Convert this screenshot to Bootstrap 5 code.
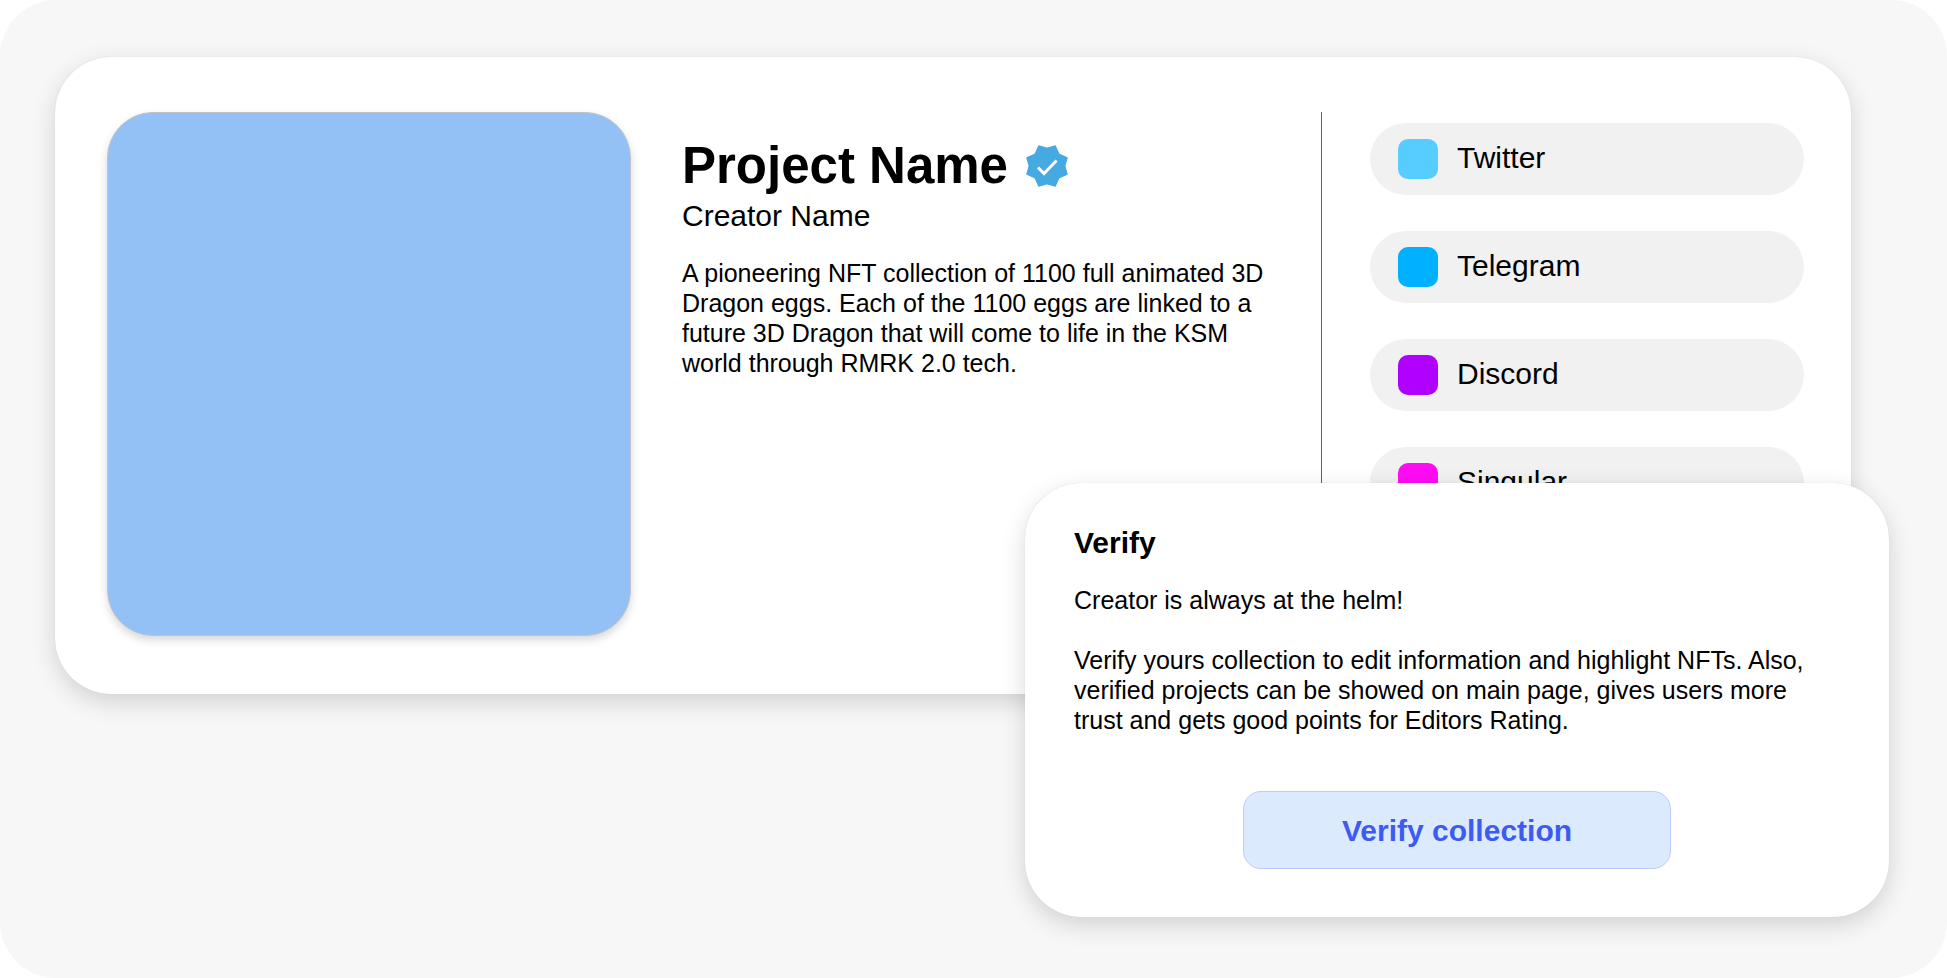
<!DOCTYPE html>
<html lang="en">
<head>
<meta charset="utf-8">
<meta name="viewport" content="width=device-width, initial-scale=1">
<title>Project Name</title>
<link rel="stylesheet" href="https://cdn.jsdelivr.net/npm/bootstrap@5.3.0/dist/css/bootstrap.min.css">
<style>
  body { background: #fff; color: #000; font-family: "Liberation Sans", Arial, sans-serif; font-size: 25px; line-height: 30px; }
  .stage { background: #f7f7f7; border-radius: 56px; padding: 57px 96px 57px 55px; }
  .panel { background: #fff; border-radius: 56px; box-shadow: 0 8px 24px rgba(0,0,0,.15), 0 0 1px rgba(0,0,0,.15); }
  .project { padding: 55px 47px 58px 52px; gap: 51px; }
  .cover { width: 524px; height: 524px; background: #94c1f5; border: 1px solid #bfc3c8; border-radius: 46px; box-shadow: 0 4px 8px rgba(0,0,0,.16); }
  .about { padding: 24px 0 0; }
  .title { font-size: 51px; line-height: 60px; }
  .sub { font-size: 30px; line-height: 40px; margin-bottom: 22px; }
  .links { width: 483px; padding: 11px 0 0 48px; border-left: 1px solid #606060; gap: 36px; }
  .pill { height: 72px; padding: 0 28px; gap: 19px; background: #f1f1f1; font-size: 30px; line-height: 36px; }
  .pill-label { padding-bottom: 2px; }
  .swatch { width: 40px; height: 40px; border-radius: 10px; }
  .twitter { background: #56ccff; }
  .telegram { background: #00b1ff; }
  .discord { background: #b000ff; }
  .singular { background: #ff0cf5; }
  .verify { right: 58px; bottom: 61px; width: 864px; padding: 40px 49px 48px; }
  .lede { margin-bottom: 30px; }
  .details { margin-bottom: 56px; }
  .verify-btn { width: 428px; height: 78px; font-size: 30px; color: #3d5af1; background: #dceafe; border: 1px solid #bfcafc; border-radius: 18px; }
  .verify-btn:hover { color: #3d5af1; background: #cfe2fe; border-color: #bfcafc; }
</style>
</head>
<body>
<main class="stage position-relative min-vh-100">
  <section class="panel project d-flex">
    <div class="cover flex-shrink-0"></div>
    <div class="about flex-grow-1">
      <div class="d-flex align-items-center gap-3">
        <h1 class="title fw-bold mb-0">Project Name</h1>
        <svg width="46" height="46" viewBox="-23 -23 46 46" role="img" aria-label="Verified">
          <path d="M-8.300-20.300 0-17.900 8.300-20.300 12-12 20.300-8.300 17.900 0 20.300 8.300 12 12 8.300 20.300 0 17.900-8.300 20.300-12 12-20.300 8.300-17.900 0-20.300-8.300-12-12Z" fill="#45a9e2" stroke="#45a9e2" stroke-width="1" stroke-linejoin="round"/>
          <path d="M-9 1.500-3 7.500 9.500-5.500" fill="none" stroke="#fff" stroke-width="3"/>
        </svg>
      </div>
      <p class="sub">Creator Name</p>
      <p class="mb-0">A pioneering NFT collection of 1100 full animated 3D<br>Dragon eggs. Each of the 1100 eggs are linked to a<br>future 3D Dragon that will come to life in the KSM<br>world through RMRK 2.0 tech.</p>
    </div>
    <nav class="links d-flex flex-column flex-shrink-0" aria-label="Project links">
      <a href="#" class="pill rounded-pill d-flex align-items-center text-decoration-none text-black"><span class="swatch twitter"></span><span class="pill-label">Twitter</span></a>
      <a href="#" class="pill rounded-pill d-flex align-items-center text-decoration-none text-black"><span class="swatch telegram"></span><span class="pill-label">Telegram</span></a>
      <a href="#" class="pill rounded-pill d-flex align-items-center text-decoration-none text-black"><span class="swatch discord"></span><span class="pill-label">Discord</span></a>
      <a href="#" class="pill rounded-pill d-flex align-items-center text-decoration-none text-black"><span class="swatch singular"></span><span class="pill-label">Singular</span></a>
    </nav>
  </section>

  <section class="panel verify position-absolute">
    <h2 class="sub fw-bold">Verify</h2>
    <p class="lede">Creator is always at the helm!</p>
    <p class="details">Verify yours collection to edit information and highlight NFTs. Also,<br>verified projects can be showed on main page, gives users more<br>trust and gets good points for Editors Rating.</p>
    <button type="button" class="btn verify-btn fw-bold d-block mx-auto">Verify collection</button>
  </section>
</main>
<script src="https://cdn.jsdelivr.net/npm/bootstrap@5.3.0/dist/js/bootstrap.bundle.min.js"></script>
</body>
</html>
